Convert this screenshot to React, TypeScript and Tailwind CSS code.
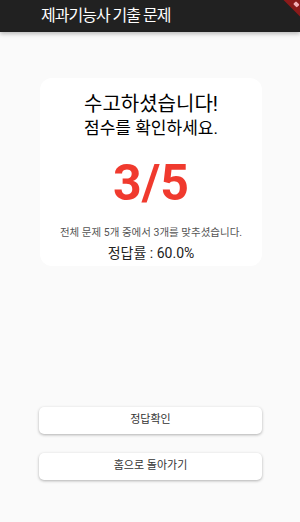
import React from "react";

export default function App() {
  const font = { fontFamily: "Roboto, 'Noto Sans CJK KR', 'Noto Sans', sans-serif" };
  return (
    <div className="relative w-[300px] h-[522px] bg-[#fafafa] overflow-hidden flex flex-col" style={font}>
      <div className="h-[32px] bg-[#212121] flex items-center pl-[41px] shadow-[0_2px_4px_rgba(0,0,0,0.25)] z-10 shrink-0">
        <span className="text-white text-[16px] tracking-[-1px] leading-none">제과기능사 기출 문제</span>
      </div>
      <div className="absolute top-[-2px] right-[-24px] w-[56px] h-[12px] bg-[#8b1a1a] rotate-45 z-20 flex items-center justify-center">
        <div className="w-[5px] h-[4px] bg-[#f3b0b8] rounded-[1px]" />
      </div>
      <div className="px-[40px] pt-[46px]">
        <div className="bg-white rounded-[12px] h-[188px] w-[222px] flex flex-col items-center pt-[14px]">
          <div className="text-[20px] leading-[24px] text-black">수고하셨습니다!</div>
          <div className="text-[17px] leading-[22px] text-black mt-[1px]">점수를 확인하세요.</div>
          <div className="text-[50px] leading-[50px] font-bold text-[#f03a2e] mt-[19px]">3/5</div>
          <div className="text-[10.5px] leading-[14px] text-[#555] mt-[18px]">전체 문제 5개 중에서 3개를 맞추셨습니다.</div>
          <div className="text-[14px] leading-[18px] text-[#222] mt-[4px]">정답률 : 60.0%</div>
        </div>
      </div>
      <div className="flex flex-col gap-[19px] px-[39px] mt-[141px]">
        <button className="h-[27px] w-[223px] bg-white rounded-[5px] shadow-[0_1px_3px_rgba(0,0,0,0.3)] text-[11px] text-[#333]">정답확인</button>
        <button className="h-[27px] w-[223px] bg-white rounded-[5px] shadow-[0_1px_3px_rgba(0,0,0,0.3)] text-[11px] text-[#333]">홈으로 돌아가기</button>
      </div>
    </div>
  );
}
